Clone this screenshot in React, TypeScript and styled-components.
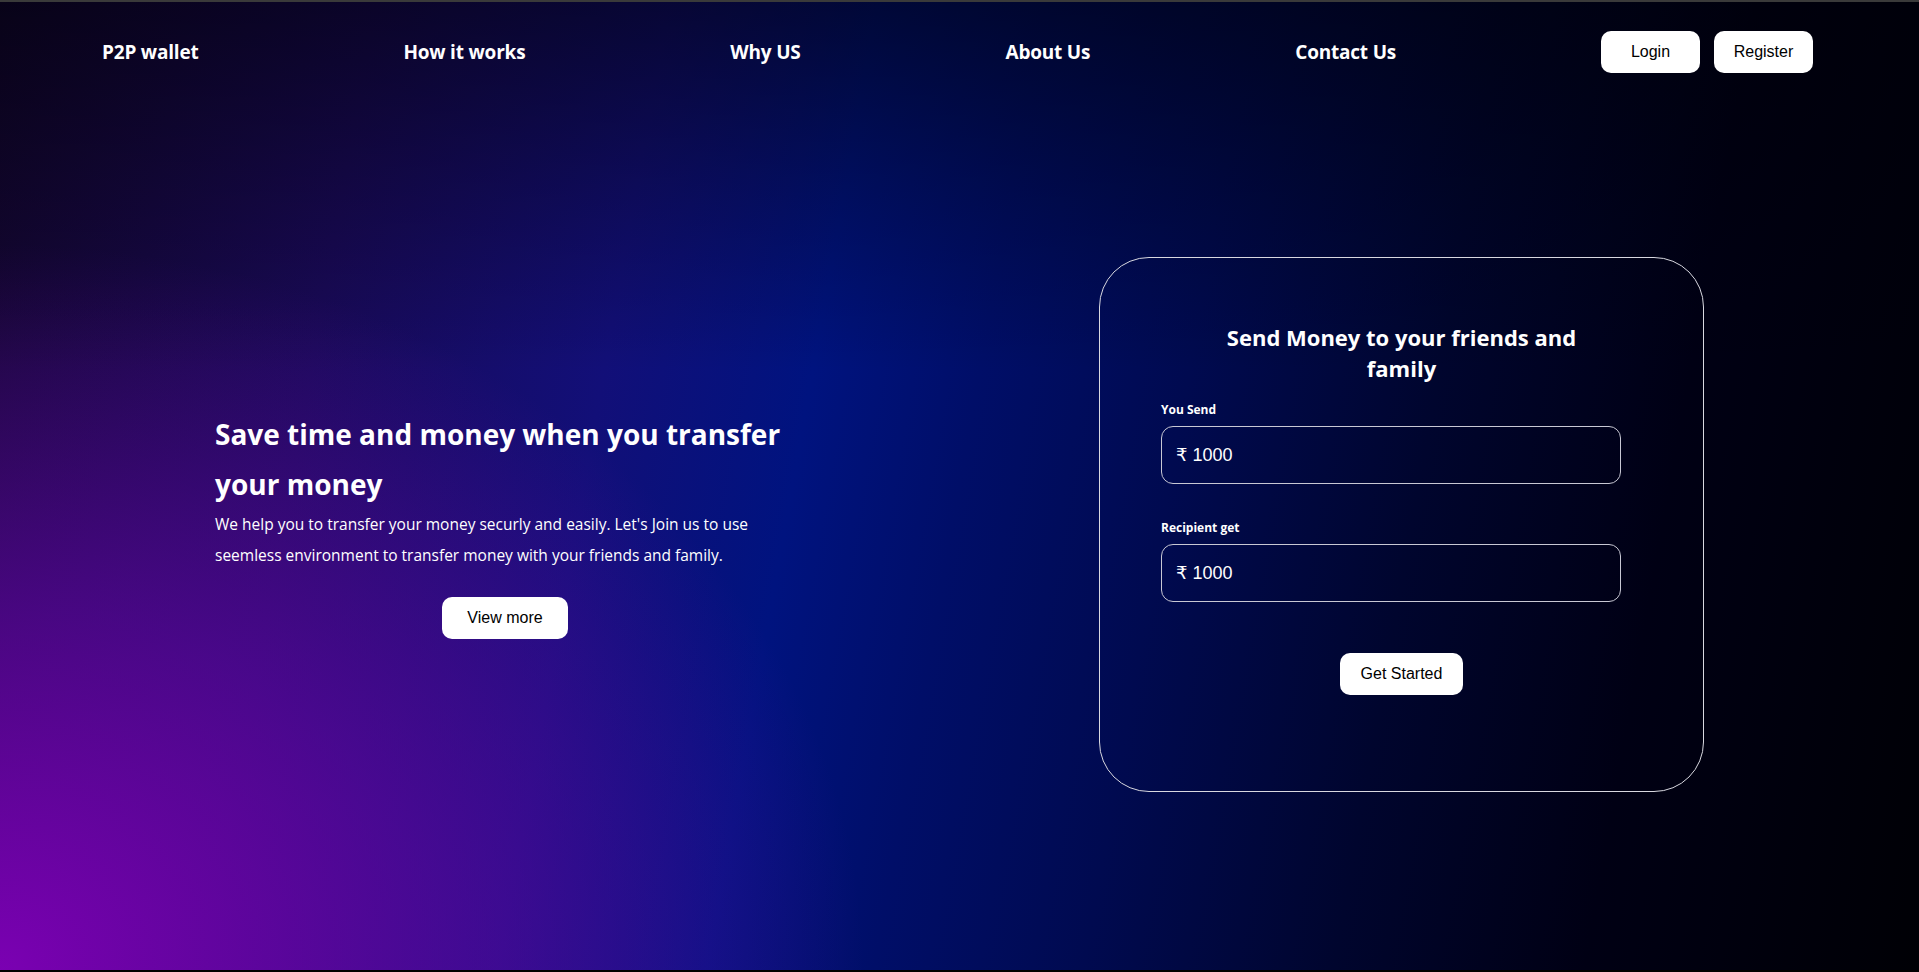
import React from 'react';
import styled, { createGlobalStyle } from 'styled-components';

const GlobalStyle = createGlobalStyle`
  * {
    box-sizing: border-box;
  }
  body {
    margin: 0;
    font-family: 'Open Sans', 'Noto Sans', sans-serif;
    background: #000;
  }
`;

const Page = styled.div`
  height: 100vh;
  display: flex;
  flex-direction: column;
  color: #fff;
  border-top: 2px solid #3a3a3a;
  border-bottom: 2px solid #000;
  background:
    linear-gradient(to bottom, rgba(0, 0, 8, 0.6) 0%, rgba(0, 0, 8, 0.3) 18%, rgba(0, 0, 0, 0) 38%),
    radial-gradient(ellipse 45% 75% at 0% 100%, rgba(128, 0, 184, 0.95) 0%, rgba(104, 6, 172, 0.6) 50%, rgba(90, 8, 160, 0) 100%),
    linear-gradient(100deg, #140630 0%, #1a0a5a 18%, #120f78 32%, #00137f 42%, #000e68 50%, #000a50 60%, #00052e 72%, #000014 84%, #000005 100%);
`;

const Nav = styled.nav`
  height: 100px;
  padding: 0 106px 0 102px;
  display: flex;
  align-items: center;
  justify-content: space-between;
`;

const NavLink = styled.a`
  font-size: 19px;
  font-weight: 700;
  color: #fff;
  text-decoration: none;
  letter-spacing: -0.2px;
`;

const NavButtons = styled.div`
  display: flex;
  gap: 14px;
`;

const WhiteButton = styled.button<{ $w?: number; $px?: number }>`
  height: 42px;
  ${(p) => (p.$w ? `width: ${p.$w}px;` : `padding: 0 ${p.$px ?? 24}px;`)}
  border: none;
  border-radius: 10px;
  background: #fff;
  color: #000;
  font-family: 'Liberation Sans', Arial, sans-serif;
  font-size: 16px;
  cursor: pointer;
`;

const Hero = styled.main`
  flex: 1;
  padding: 0 215px 24px;
  display: flex;
  align-items: center;
  justify-content: space-between;
`;

const Intro = styled.section`
  width: 580px;
  display: flex;
  flex-direction: column;
`;

const Headline = styled.h1`
  margin: 0;
  font-size: 28px;
  font-weight: 700;
  line-height: 50px;
`;

const Lead = styled.p`
  margin: 0 0 26px;
  font-size: 15.5px;
  line-height: 31px;
`;

const CenterRow = styled.div`
  display: flex;
  justify-content: center;
`;

const Card = styled.form`
  width: 605px;
  height: 535px;
  padding: 64px 0 0 61px;
  border: 1px solid #d8d8e0;
  border-radius: 50px;
  display: flex;
  flex-direction: column;
`;

const CardTitle = styled.h2`
  margin: 0 61px 18px 0;
  text-align: center;
  font-size: 22px;
  font-weight: 700;
  line-height: 31px;
`;

const Label = styled.label`
  display: block;
  font-size: 12px;
  font-weight: 700;
  line-height: 16px;
  margin-bottom: 8px;
`;

const Field = styled.div<{ $gap: number }>`
  margin-bottom: ${(p) => p.$gap}px;
`;

const AmountInput = styled.input`
  width: 460px;
  height: 58px;
  padding: 0 14px;
  border: 1px solid #c8c8d4;
  border-radius: 12px;
  background: transparent;
  color: #fff;
  font-family: 'Liberation Sans', 'DejaVu Sans', Arial, sans-serif;
  font-size: 18px;
  outline: none;
`;

const CardActions = styled.div`
  display: flex;
  justify-content: center;
  margin-right: 61px;
`;

export default function App() {
  return (
    <>
      <GlobalStyle />
      <Page>
        <Nav>
          <NavLink href="#">P2P wallet</NavLink>
          <NavLink href="#">How it works</NavLink>
          <NavLink href="#">Why US</NavLink>
          <NavLink href="#">About Us</NavLink>
          <NavLink href="#">Contact Us</NavLink>
          <NavButtons>
            <WhiteButton type="button" $w={99}>Login</WhiteButton>
            <WhiteButton type="button" $w={99}>Register</WhiteButton>
          </NavButtons>
        </Nav>

        <Hero>
          <Intro>
            <Headline>Save time and money when you transfer your money</Headline>
            <Lead>
              We help you to transfer your money securly and easily. Let's Join us to use seemless
              environment to transfer money with your friends and family.
            </Lead>
            <CenterRow>
              <WhiteButton type="button" $px={25}>View more</WhiteButton>
            </CenterRow>
          </Intro>

          <Card onSubmit={(e) => e.preventDefault()}>
            <CardTitle>
              Send Money to your friends and
              <br />
              family
            </CardTitle>
            <Field $gap={36}>
              <Label>You Send</Label>
              <AmountInput defaultValue="₹ 1000" />
            </Field>
            <Field $gap={51}>
              <Label>Recipient get</Label>
              <AmountInput defaultValue="₹ 1000" />
            </Field>
            <CardActions>
              <WhiteButton type="button" $px={21}>Get Started</WhiteButton>
            </CardActions>
          </Card>
        </Hero>
      </Page>
    </>
  );
}
